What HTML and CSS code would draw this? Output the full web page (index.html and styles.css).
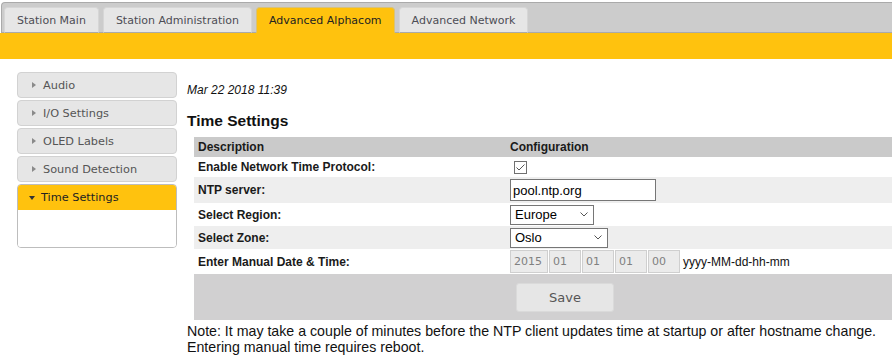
FILE: index.html
```html
<!DOCTYPE html>
<html lang="en">
<head>
    <meta charset="UTF-8">
    <title>Advanced Alphacom - Time Settings</title>
    <link rel="stylesheet" href="styles.css">
</head>
<body>
    <!-- Top navigation -->
    <div class="tabbar">
        <a class="tab" href="#">Station Main</a>
        <a class="tab" href="#">Station Administration</a>
        <a class="tab active" href="#">Advanced Alphacom</a>
        <a class="tab" href="#">Advanced Network</a>
    </div>
    <div class="subbar"></div>

    <div class="main">
        <!-- Side menu -->
        <div class="sidemenu">
            <a class="item" href="#"><span class="arrow"></span>Audio</a>
            <a class="item" href="#"><span class="arrow"></span>I/O Settings</a>
            <a class="item" href="#"><span class="arrow"></span>OLED Labels</a>
            <a class="item" href="#"><span class="arrow"></span>Sound Detection</a>
            <div class="item-open">
                <div class="item-head"><span class="arrow-down"></span>Time Settings</div>
                <div class="item-body"></div>
            </div>
        </div>

        <div class="content">
            <div class="stamp">Mar 22 2018 11:39</div>
            <h2>Time Settings</h2>

            <form>
                <table class="settings">
                    <tr class="head">
                        <td class="desc">Description</td>
                        <td class="conf">Configuration</td>
                    </tr>
                    <tr class="r1">
                        <td class="desc">Enable Network Time Protocol:</td>
                        <td class="conf">
                            <span class="check">
                                <svg width="11" height="11" viewBox="0 0 11 11"><polyline points="1.5,5.5 4,8 9.5,2.5" fill="none" stroke="#555" stroke-width="1"/></svg>
                            </span>
                        </td>
                    </tr>
                    <tr class="r2 alt">
                        <td class="desc">NTP server:</td>
                        <td class="conf"><input class="text" type="text" value="pool.ntp.org"></td>
                    </tr>
                    <tr class="r3">
                        <td class="desc">Select Region:</td>
                        <td class="conf">
                            <span class="dropdown region">
                                <select><option>Europe</option></select>
                                <svg width="8" height="5" viewBox="0 0 8 5"><polyline points="0.5,0.5 4,4 7.5,0.5" fill="none" stroke="#555" stroke-width="1"/></svg>
                            </span>
                        </td>
                    </tr>
                    <tr class="r4 alt">
                        <td class="desc">Select Zone:</td>
                        <td class="conf">
                            <span class="dropdown zone">
                                <select><option>Oslo</option></select>
                                <svg width="8" height="5" viewBox="0 0 8 5"><polyline points="0.5,0.5 4,4 7.5,0.5" fill="none" stroke="#555" stroke-width="1"/></svg>
                            </span>
                        </td>
                    </tr>
                    <tr class="r5">
                        <td class="desc">Enter Manual Date &amp; Time:</td>
                        <td class="conf">
                            <div class="datetime">
                                <input class="part year" type="text" value="2015" disabled>
                                <input class="part" type="text" value="01" disabled>
                                <input class="part" type="text" value="01" disabled>
                                <input class="part" type="text" value="01" disabled>
                                <input class="part" type="text" value="00" disabled>
                                <span class="format">yyyy-MM-dd-hh-mm</span>
                            </div>
                        </td>
                    </tr>
                    <tr class="save-row">
                        <td></td>
                        <td class="conf"><button type="button" class="save">Save</button></td>
                    </tr>
                </table>
            </form>

            <p class="note">Note: It may take a couple of minutes before the NTP client updates time at startup or after hostname change.<br>Entering manual time requires reboot.</p>
        </div>
    </div>
</body>
</html>
```

FILE: styles.css
```css
body {
    margin: 0;
    font-family: "Liberation Sans", Arial, sans-serif;
    color: #000;
    background: #fff;
}
a {
    text-decoration: none;
}

/* tabs */
.tabbar {
    display: flex;
    align-items: flex-end;
    gap: 4px;
    margin: 2px 0 0 1px;
    padding: 4px 0 0 2px;
    height: 31px;
    box-sizing: border-box;
    border-top: 1px solid #aaa;
    border-left: 1px solid #aaa;
    border-top-left-radius: 4px;
    background: linear-gradient(to top, #aaa 1px, #ccc 1px);
    font-family: "DejaVu Sans", Verdana, sans-serif;
    font-size: 11px;
}
.tab {
    height: 26px;
    line-height: 25px;
    padding: 0 12px;
    box-sizing: border-box;
    background: #e6e6e6;
    color: #4d4d55;
    border: 1px solid #d6d6d6;
    border-bottom-color: #aaa;
    border-radius: 4px 4px 0 0;
}
.tab.active {
    background: #ffc20e;
    color: #222;
    border-color: #d8c27a;
    border-bottom-color: #ffc20e;
}
.subbar {
    height: 26px;
    background: #ffc20e;
}

.main {
    display: flex;
    align-items: flex-start;
}

/* side menu */
.sidemenu {
    width: 160px;
    margin: 13px 10px 0 17px;
    display: flex;
    flex-direction: column;
    gap: 2px;
    font-family: "DejaVu Sans", Verdana, sans-serif;
    font-size: 11.3px;
}
.item {
    display: flex;
    align-items: center;
    height: 26px;
    box-sizing: border-box;
    padding-left: 14px;
    background: #e6e6e6;
    border: 1px solid #d2d2d2;
    border-radius: 4px;
    color: #555;
}
.arrow {
    width: 0;
    height: 0;
    margin-right: 7px;
    border-top: 3.5px solid transparent;
    border-bottom: 3.5px solid transparent;
    border-left: 4px solid #8a8a8a;
}
.item-open {
    border: 1px solid #bdbdbd;
    border-radius: 4px;
    overflow: hidden;
}
.item-head {
    display: flex;
    align-items: center;
    height: 25px;
    padding-left: 11px;
    background: #ffc20e;
    color: #222;
}
.arrow-down {
    width: 0;
    height: 0;
    margin-right: 6px;
    border-left: 3.5px solid transparent;
    border-right: 3.5px solid transparent;
    border-top: 4px solid #333;
}
.item-body {
    height: 37px;
    background: #fff;
}

/* content */
.content {
    flex: 1;
}
.stamp {
    margin-top: 24px;
    font-size: 12px;
    line-height: 14px;
    font-style: italic;
    color: #111;
}
h2 {
    margin: 15px 0 7px;
    font-size: 15.5px;
    line-height: 18px;
    color: #111;
}
.settings {
    margin-left: 7px;
    width: calc(100% - 7px);
    border-collapse: collapse;
    font-size: 12px;
}
.settings td {
    padding: 0;
    vertical-align: middle;
}
.settings td.desc {
    width: 309px;
    padding-left: 4px;
    font-weight: bold;
    color: #1a1a1a;
}
.settings td.conf {
    padding-left: 3px;
}
.head {
    height: 20px;
    background: #cacaca;
}
.head td.conf {
    font-weight: bold;
    color: #1a1a1a;
}
.r1 { height: 20px; }
.r2 { height: 26px; }
.r3 { height: 23px; }
.r4 { height: 23px; }
.r5 { height: 25px; }
.alt {
    background: #eee;
}
.check {
    display: flex;
    align-items: center;
    justify-content: center;
    width: 13px;
    height: 13px;
    box-sizing: border-box;
    margin-left: 4px;
    border: 1px solid #707070;
    background: #fff;
}
.check svg {
    display: block;
}
.text {
    display: block;
    width: 146px;
    height: 22px;
    box-sizing: border-box;
    margin: 0;
    padding: 0 2px;
    border: 1px solid #767676;
    font-family: "Liberation Sans", Arial, sans-serif;
    font-size: 13px;
    color: #000;
}
.dropdown {
    display: flex;
    align-items: center;
    height: 20px;
    box-sizing: border-box;
    border: 1px solid #767676;
    background: #fff;
}
.dropdown.region { width: 84px; }
.dropdown.zone { width: 98px; }
.dropdown select {
    appearance: none;
    -webkit-appearance: none;
    flex: 1;
    border: none;
    background: transparent;
    padding: 0 0 0 4px;
    margin: 0;
    font-family: "Liberation Sans", Arial, sans-serif;
    font-size: 13px;
    color: #000;
    outline: none;
}
.dropdown svg {
    margin-right: 5px;
}
.datetime {
    display: flex;
    align-items: center;
    gap: 1px;
}
.part {
    width: 32px;
    height: 23px;
    box-sizing: border-box;
    margin: 0;
    padding: 0 3px;
    border: 1px solid #cfcfcf;
    background: #ebebeb;
    font-family: "DejaVu Sans", Verdana, sans-serif;
    font-size: 11px;
    color: #808080;
}
.part.year {
    width: 38px;
}
.format {
    margin-left: 2px;
    font-size: 12px;
    color: #111;
}
.save-row {
    height: 46px;
    background: #d1d0d1;
}
.save-row td.conf {
    padding-left: 9px;
}
.save {
    display: block;
    width: 98px;
    height: 29px;
    background: #e6e6e6;
    border: 1px solid #dadada;
    border-radius: 3px;
    font-family: "DejaVu Sans", Verdana, sans-serif;
    font-size: 13px;
    color: #555;
    cursor: pointer;
}
.note {
    margin: 3px 0 0;
    font-size: 14.2px;
    line-height: 16px;
    color: #111;
}
```
